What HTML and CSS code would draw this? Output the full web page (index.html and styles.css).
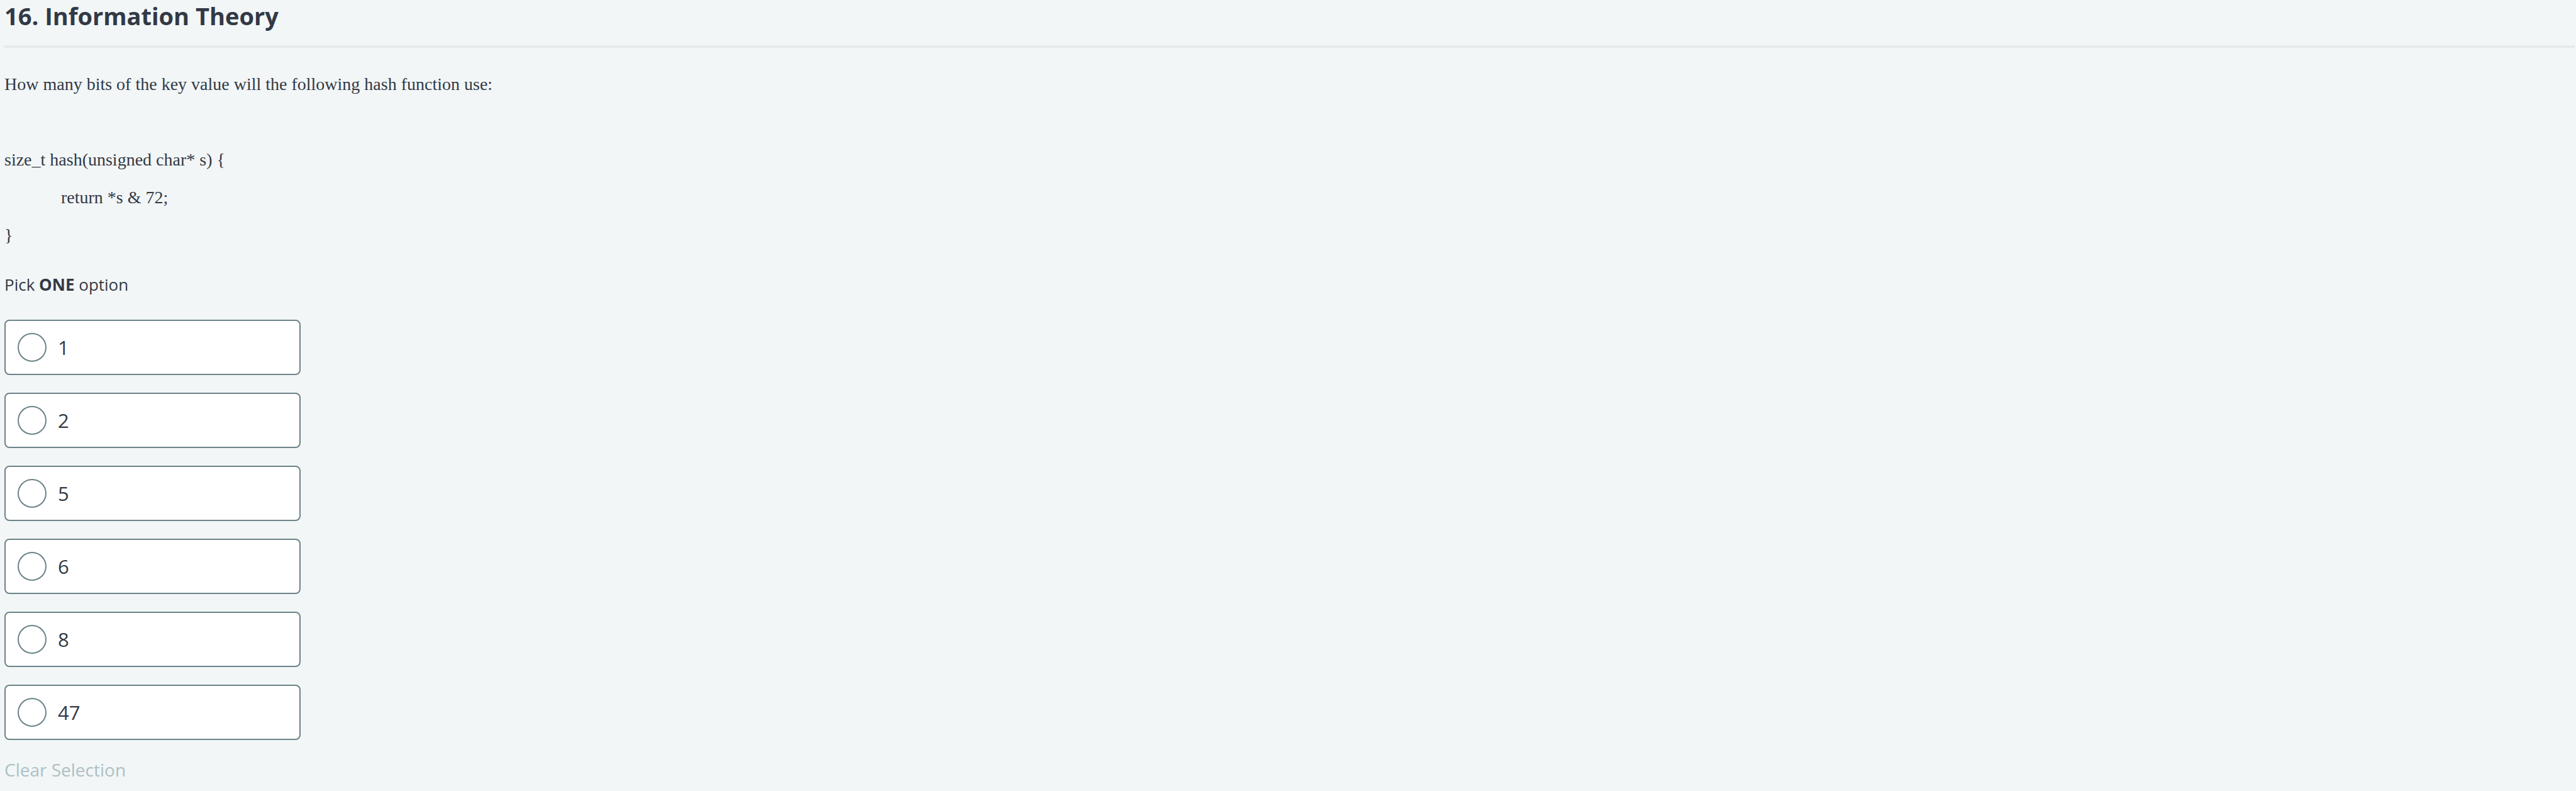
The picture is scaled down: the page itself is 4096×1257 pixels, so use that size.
FILE: index.html
```
<!DOCTYPE html>
<html lang="en">
<head>
<meta charset="utf-8">
<title>16. Information Theory</title>
<link rel="stylesheet" href="styles.css">
</head>
<body>
<main class="question">
  <h1 class="question-title">16. Information Theory</h1>
  <div class="prompt">
    <p>How many bits of the key value will the following hash function use:</p>
    <p>&nbsp;</p>
    <p>size_t hash(unsigned char* s) {</p>
    <p class="indented">return *s &amp; 72;</p>
    <p>}</p>
  </div>
  <form class="answers">
    <fieldset class="options">
      <legend class="hint">Pick <strong>ONE</strong> option</legend>
      <label class="option"><input class="radio" type="radio" name="answer" value="1"><span>1</span></label>
      <label class="option"><input class="radio" type="radio" name="answer" value="2"><span>2</span></label>
      <label class="option"><input class="radio" type="radio" name="answer" value="5"><span>5</span></label>
      <label class="option"><input class="radio" type="radio" name="answer" value="6"><span>6</span></label>
      <label class="option"><input class="radio" type="radio" name="answer" value="8"><span>8</span></label>
      <label class="option"><input class="radio" type="radio" name="answer" value="47"><span>47</span></label>
    </fieldset>
    <button class="clear" type="reset">Clear Selection</button>
  </form>
</main>
</body>
</html>
```
FILE: styles.css
```
* {
  box-sizing: border-box;
}

body {
  margin: 0;
  background: #f2f6f7;
  color: #323945;
  font-family: "Open Sans", "Noto Sans", sans-serif;
}

.question {
  padding: 0 2px 0 7px;
}

.question-title {
  margin: 0;
  padding-bottom: 22px;
  border-bottom: 4px solid #e5eaec;
  font-size: 38px;
  font-weight: 700;
  line-height: 50px;
}

.prompt {
  padding-top: 28px;
  font-family: "Liberation Serif", "Times New Roman", serif;
  font-size: 28px;
  line-height: 60px;
}

.prompt p {
  margin: 0;
}

.prompt .indented {
  padding-left: 90px;
}

.answers {
  display: flex;
  flex-direction: column;
  align-items: flex-start;
  padding-top: 28px;
}

.options {
  display: flex;
  flex-direction: column;
  gap: 28px;
  width: 471px;
  max-width: 100%;
  margin: 0;
  padding: 0;
  border: 0;
}

.hint {
  padding: 0 0 36px;
  font-size: 26px;
  line-height: 40px;
}

.option {
  display: flex;
  align-items: center;
  gap: 18px;
  height: 88px;
  padding: 0 19px;
  border: 2px solid #6b8389;
  border-radius: 8px;
  background: #fff;
  font-size: 31px;
  line-height: 40px;
}

.radio {
  appearance: none;
  flex: none;
  width: 46px;
  height: 46px;
  margin: 0;
  border: 2px solid #6b8389;
  border-radius: 50%;
  background: #fff;
}

.radio:checked {
  box-shadow: inset 0 0 0 8px #fff;
  background: #323945;
}

.clear {
  margin: 27px 0 0;
  padding: 0;
  border: 0;
  background: none;
  color: #adc0c4;
  font: inherit;
  font-size: 28px;
  line-height: 40px;
}
```
